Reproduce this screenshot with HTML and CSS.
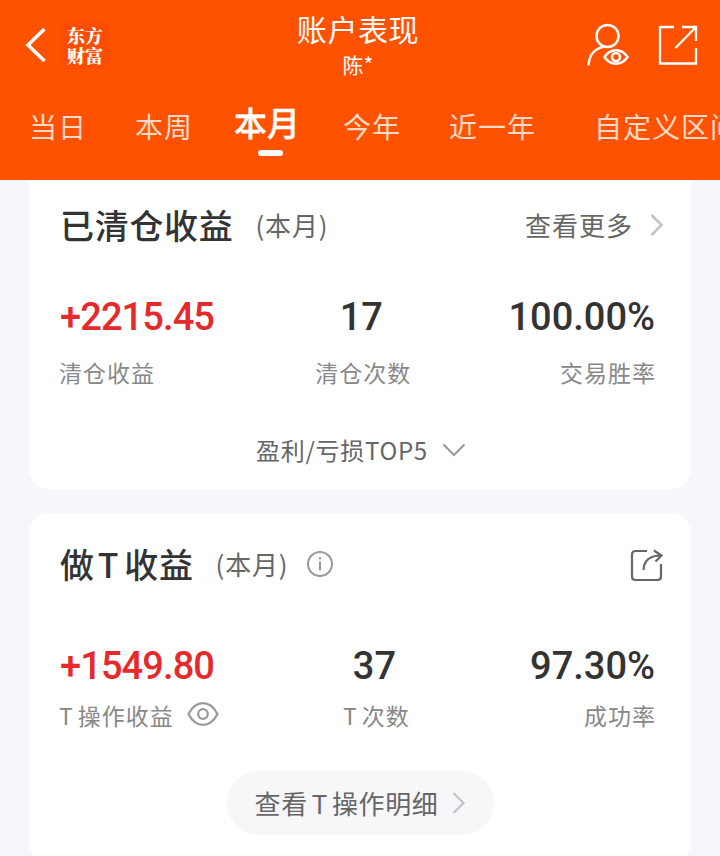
FILE: index.html
```html
<!DOCTYPE html>
<html lang="zh-CN">
<head>
    <meta charset="UTF-8">
    <meta name="viewport" content="width=device-width, initial-scale=1.0">
    <title>账户表现</title>
    <link rel="stylesheet" href="styles.css">
</head>
<body>
    <header class="header">
        <div class="topbar">
            <div class="topbar-left">
                <svg class="back" width="22" height="36" viewBox="0 0 22 36" fill="none" stroke="#fff" stroke-width="3.6"><path d="M19.5 2 3 18l16.500 16"/></svg>
                <div class="logo">东方<br>财富</div>
            </div>
            <div class="heading">
                <h1>账户表现</h1>
                <div class="user">陈*</div>
            </div>
            <div class="topbar-right">
                <svg width="42" height="44" viewBox="0 0 42 44" fill="none" stroke="#fff" stroke-width="2.5">
                    <circle cx="20.500" cy="13" r="11"/>
                    <path d="M1.500 42.500C2 32 8 25 18 23.500"/>
                    <path d="M17.500 34c6-9 17-9 23 0-6 9-17 9-23 0z" stroke-width="2.600"/>
                    <circle cx="29" cy="34" r="4" stroke-width="2.600"/>
                </svg>
                <svg width="40" height="40" viewBox="0 0 40 40" fill="none" stroke="#fff" stroke-width="2.300">
                    <path d="M16 2H2v36.500h36V23"/>
                    <path d="M24 2h14v14M38 2 17.500 23"/>
                </svg>
            </div>
        </div>
        <nav class="tabs">
            <div class="tab">当日</div>
            <div class="tab">本周</div>
            <div class="tab active">本月</div>
            <div class="tab">今年</div>
            <div class="tab">近一年</div>
            <div class="tab custom">自定义区间</div>
        </nav>
    </header>

    <main class="content">
        <section class="card closed">
            <div class="card-head">
                <h2>已清仓收益</h2>
                <span class="period">(本月)</span>
                <div class="more">
                    <span>查看更多</span>
                    <svg width="14" height="24" viewBox="0 0 14 24" fill="none" stroke="#c4c4c4" stroke-width="2.600"><path d="m1.500 2 10 10-10 10"/></svg>
                </div>
            </div>
            <div class="stats">
                <div class="stat">
                    <div class="value red">+2215.45</div>
                    <div class="label">清仓收益</div>
                </div>
                <div class="stat center">
                    <div class="value">17</div>
                    <div class="label">清仓次数</div>
                </div>
                <div class="stat right">
                    <div class="value">100.00%</div>
                    <div class="label">交易胜率</div>
                </div>
            </div>
            <div class="expand">
                盈利/亏损TOP5
                <svg width="24" height="14" viewBox="0 0 24 14" fill="none" stroke="#999" stroke-width="2"><path d="m1.500 1.500 10.500 10.500 10.500-10.500"/></svg>
            </div>
        </section>

        <section class="card trades">
            <div class="card-head">
                <h2>做<span class="t">T</span>收益</h2>
                <span class="period">(本月)</span>
                <svg class="info" width="28" height="28" viewBox="0 0 28 28" fill="none" stroke="#999" stroke-width="2">
                    <circle cx="14" cy="14" r="12"/>
                    <path d="M14 11.500v9M14 7v2.500"/>
                </svg>
                <svg class="share" width="34" height="34" viewBox="0 0 34 34" fill="none" stroke="#666" stroke-width="2.200">
                    <path d="M18 3H6.500Q3 3 3 6.500v22Q3 32 6.500 32h22q3.500 0 3.500-3.500V16"/>
                    <path d="M14.500 22C15 12 20.500 7.500 32 7.500M25 2.500l7.500 5-6 6"/>
                </svg>
            </div>
            <div class="stats">
                <div class="stat">
                    <div class="value red">+1549.80</div>
                    <div class="label">
                        <span class="t">T</span>操作收益
                        <svg class="eye" width="32" height="26" viewBox="0 0 32 26" fill="none" stroke="#999" stroke-width="2.200">
                            <path d="M1.500 13C9 -1.500 23 -1.500 30.500 13 23 27.500 9 27.500 1.500 13z"/>
                            <circle cx="16" cy="13" r="4.800"/>
                        </svg>
                    </div>
                </div>
                <div class="stat center">
                    <div class="value">37</div>
                    <div class="label"><span class="t">T</span>次数</div>
                </div>
                <div class="stat right">
                    <div class="value">97.30%</div>
                    <div class="label">成功率</div>
                </div>
            </div>
            <div class="detail">
                查看<span class="t">T</span>操作明细
                <svg width="14" height="24" viewBox="0 0 14 24" fill="none" stroke="#c4c4c4" stroke-width="2.200"><path d="m1.500 2 10 10-10 10"/></svg>
            </div>
        </section>
    </main>
</body>
</html>
```
FILE: styles.css
```css
* { box-sizing: border-box; }
body { margin: 0; height: 856px; overflow: hidden; background: #f6f7fa; color: #333; font-family: "Noto Sans CJK SC", sans-serif; }
h1, h2 { margin: 0; }
svg { display: block; flex: none; }

.header { height: 180px; background: #ff5200; color: #fff; overflow: hidden; }
.topbar { display: grid; grid-template-columns: 1fr auto 1fr; height: 90px; padding: 0 22px 0 25px; }
.topbar-left { display: flex; align-items: center; gap: 15px; }
.logo { width: 46px; height: 48px; padding: 4px 0 0 5px; border-radius: 6px; background: #fd4d05; font-family: "Noto Serif CJK SC", "Noto Sans CJK SC", sans-serif; font-size: 18px; font-weight: 900; line-height: 20px; }
.heading { padding: 8px 7px 0 0; text-align: center; }
.heading h1 { font-size: 30px; font-weight: 400; line-height: 40px; letter-spacing: 0.6px; }
.user { font-size: 21px; line-height: 32px; }
.topbar-right { display: flex; justify-content: flex-end; align-items: center; gap: 29px; }

.tabs { display: flex; gap: 48px; padding-left: 29px; white-space: nowrap; }
.tab { flex: none; padding-top: 16px; color: #ffdac8; font-size: 28px; line-height: 40px; letter-spacing: 1px; }
.tab.active { display: flex; flex-direction: column; align-items: center; margin: 0 -5px 0 -7px; padding-top: 12px; color: #fff; font-size: 33px; font-weight: 500; letter-spacing: 0; -webkit-text-stroke: 0.4px #fff; }
.tab.active::after { content: ""; width: 25px; height: 6px; margin: 8px 0 0 6px; border-radius: 3px; background: #fff; }
.tab.custom { margin-left: 10px; }

.content { padding: 0 29px; }
.card { padding: 0 36px 0 31px; background: #fff; border-radius: 20px; }
.closed { height: 309px; padding-top: 20px; border-radius: 4px 4px 20px 20px; }
.trades { height: 350px; margin-top: 24px; padding-top: 26px; }

.card-head { display: flex; align-items: center; height: 50px; }
.card-head h2 { font-size: 34px; font-weight: 500; line-height: 50px; letter-spacing: 0.7px; }
.card-head h2 .t { margin: 0 5px 0 3px; }
.period { margin-left: 22px; padding-bottom: 2px; color: #666; font-size: 26px; letter-spacing: 0.8px; }
.more { display: flex; align-items: center; gap: 17px; margin: 0 -9px 0 auto; color: #666; font-size: 26px; letter-spacing: 1px; }
.more span { padding-bottom: 1px; }
.info { margin-left: 18px; }
.share { margin: 1px -8px 0 auto; }

.stats { display: flex; justify-content: space-between; margin-top: 42px; }
.center { text-align: center; }
.right { text-align: right; }
.value { font-family: Roboto, sans-serif; font-size: 38px; font-weight: 500; line-height: 50px; letter-spacing: 0; }
.red { color: #e52a2c; letter-spacing: -0.9px; }
.label { margin-top: 12px; color: #888; font-size: 23px; line-height: 36px; letter-spacing: 1px; }
.stat:first-child .label { margin-left: -1px; }
.right .label { margin-right: -1px; }
.center .label { margin-left: 2px; margin-right: -2px; }
.trades .stats { margin-top: 52px; }
.trades .label { display: flex; align-items: center; justify-content: center; margin-top: 6px; }
.trades .stat:first-child .label { justify-content: flex-start; }
.trades .right .label { justify-content: flex-end; }
.eye { margin: 0 0 2px 13px; }
.label .t { margin-right: 4px; }

.expand { display: flex; align-items: center; justify-content: center; gap: 14px; margin: 42px -7px 0 0; color: #666; font-size: 24px; line-height: 36px; letter-spacing: 0.7px; }
.detail { display: flex; align-items: center; justify-content: center; width: 267px; height: 64px; margin: 38px 0 0 167px; padding-bottom: 2px; border-radius: 32px; background: #f7f7f9; color: #666; font-size: 26px; letter-spacing: 0.6px; }
.detail .t { margin: 0 4px; }
.detail svg { margin: 2px 0 0 14px; }
```
